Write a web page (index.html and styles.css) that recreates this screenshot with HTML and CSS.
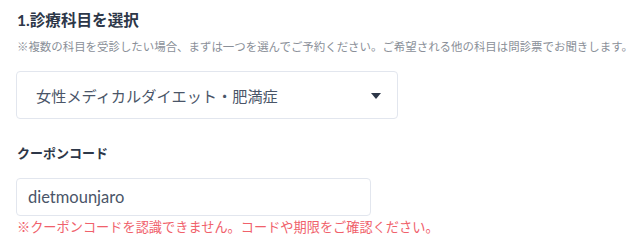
FILE: index.html
```
<!DOCTYPE html>
<html lang="ja">
<head>
    <meta charset="UTF-8">
    <meta name="viewport" content="width=device-width, initial-scale=1.0">
    <title>診療科目を選択</title>
    <link rel="stylesheet" href="styles.css">
</head>
<body>
    <div class="formulario">
        <h2 class="titulo">1.診療科目を選択</h2>
        <p class="nota">※複数の科目を受診したい場合、まずは一つを選んでご予約ください。ご希望される他の科目は問診票でお聞きします。</p>
        <div class="seletor">
            <span class="seletor-texto">女性メディカルダイエット・肥満症</span>
            <svg class="seta" width="10" height="6" viewBox="0 0 10 6"><path d="M0 0h10L5 6z" fill="#2d3748"/></svg>
        </div>
        <label class="rotulo" for="cupom">クーポンコード</label>
        <input type="text" id="cupom" class="campo" value="dietmounjaro">
        <p class="erro">※クーポンコードを認識できません。コードや期限をご確認ください。</p>
    </div>
</body>
</html>
```

FILE: styles.css
```
body {
    margin: 0;
    background-color: #fff;
    font-family: Lato, "Noto Sans CJK JP", sans-serif;
}
.formulario {
    display: flex;
    flex-direction: column;
    align-items: flex-start;
    padding: 8px 0 0 17px;
}
.titulo {
    margin: 0;
    font-size: 15.6px;
    line-height: 25px;
    font-weight: 700;
    color: #2d3748;
}
.nota {
    margin: 6px 0 0;
    font-size: 11.45px;
    line-height: 16px;
    color: #8a8f98;
    white-space: nowrap;
}
.seletor {
    box-sizing: border-box;
    display: flex;
    justify-content: space-between;
    align-items: center;
    width: 382px;
    height: 48px;
    margin: 16px 0 0 -1px;
    padding: 0 16px 0 19px;
    border: 1px solid #e2e6ee;
    border-radius: 4px;
}
.seletor-texto {
    font-size: 15.2px;
    color: #4a5568;
}
.seta {
    margin-top: 1px;
}
.rotulo {
    margin-top: 24px;
    font-size: 13px;
    line-height: 20px;
    font-weight: 700;
    color: #2d3748;
}
.campo {
    box-sizing: border-box;
    width: 355px;
    height: 38px;
    margin: 15px 0 0 -1px;
    padding: 0 11px;
    border: 1px solid #e2e6ee;
    border-radius: 4px;
    font-family: Lato, "Noto Sans CJK JP", sans-serif;
    font-size: 16.5px;
    color: #4a5568;
    outline: none;
}
.erro {
    margin: 1px 0 0;
    font-size: 13.2px;
    line-height: 20px;
    color: #f0616b;
    white-space: nowrap;
}
```
